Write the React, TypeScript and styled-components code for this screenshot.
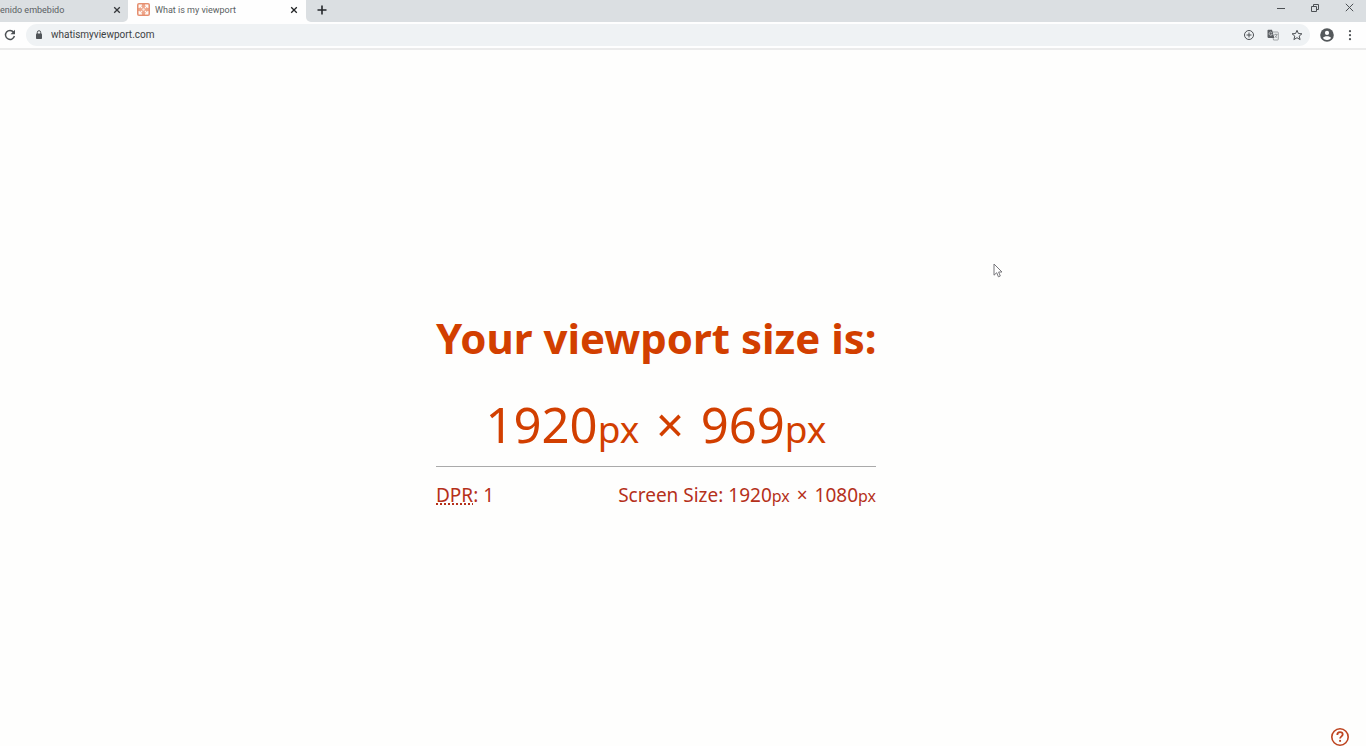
import React from "react";
import styled, { createGlobalStyle } from "styled-components";

const GlobalStyle = createGlobalStyle`
  *, *::before, *::after { box-sizing: border-box; }
  body {
    margin: 0;
    background: #fefefd;
    font-family: "Noto Sans", "Open Sans", sans-serif;
  }
`;

const Window = styled.div`
  display: flex;
  flex-direction: column;
  min-height: 100vh;
  overflow: hidden;
`;

const TabStrip = styled.div`
  display: flex;
  height: 22px;
  background: #fefefe;
`;

const Tab = styled.div<{ $active?: boolean }>`
  display: flex;
  align-items: center;
  flex: none;
  width: ${(p) => (p.$active ? 178 : 128)}px;
  padding: ${(p) => (p.$active ? "0 7px 3px 9px" : "0 6px 3px 0")};
  background: ${(p) => (p.$active ? "#fefefe" : "#dbdfe2")};
  border-bottom-right-radius: ${(p) => (p.$active ? 0 : 5)}px;
`;

const TabTitle = styled.span<{ $inset?: number }>`
  flex: 1;
  margin-left: ${(p) => p.$inset ?? 0}px;
  color: #5a5e62;
  font-family: Roboto, "Open Sans", sans-serif;
  font-size: 9px;
  line-height: 14px;
  white-space: nowrap;
`;

const IconButton = styled.button<{ $size?: number; $color?: string }>`
  display: flex;
  align-items: center;
  justify-content: center;
  flex: none;
  width: ${(p) => p.$size ?? 12}px;
  height: ${(p) => p.$size ?? 12}px;
  padding: 0;
  border: 0;
  background: none;
  color: ${(p) => p.$color ?? "#4c5054"};
`;

const StripRest = styled.div`
  display: flex;
  flex: 1;
  align-items: center;
  justify-content: space-between;
  padding: 0 11px 3px 10px;
  background: #dbdfe2;
  border-bottom-left-radius: 5px;
`;

const WindowControls = styled.div`
  display: flex;
  gap: 22px;
  padding-bottom: 4px;
`;

const Toolbar = styled.form`
  display: flex;
  align-items: center;
  height: 28px;
  padding: 0 10px 0 4px;
  gap: 10px;
  background: #fefefe;
  border-bottom: 2px solid #ebebeb;
`;

const AddressBar = styled.label`
  display: flex;
  flex: 1;
  align-items: center;
  height: 22px;
  padding: 0 6px 0 8px;
  border-radius: 11px;
  background: #eff2f4;
`;

const AddressInput = styled.input`
  flex: 1;
  min-width: 0;
  height: 16px;
  margin-left: 7px;
  padding: 0;
  border: 0;
  outline: 0;
  background: none;
  color: #3c3f43;
  font-family: Roboto, "Open Sans", sans-serif;
  font-size: 10px;
  line-height: 16px;
`;

const AddressActions = styled.div`
  display: flex;
  gap: 10px;
`;

const ToolbarActions = styled.div`
  display: flex;
  align-items: center;
  gap: 10px;
`;

const Page = styled.main`
  position: relative;
  display: flex;
  flex: 1;
  align-items: center;
  justify-content: center;
  padding: 0 54px 0 0;
  color: #d23f00;
`;

const Report = styled.section`
  width: 440px;
  padding-top: 21px;
`;

const Heading = styled.h1`
  margin: 0;
  font-size: 42px;
  font-weight: 700;
  line-height: 60px;
  text-align: center;
  white-space: nowrap;
`;

const Viewport = styled.p`
  margin: 26px 0 0;
  font-size: 49px;
  line-height: 60px;
  text-align: center;
  white-space: nowrap;
`;

const Times = styled.span<{ $gap: number }>`
  margin: 0 ${(p) => p.$gap}px;
`;

const Unit = styled.small<{ $size: number }>`
  font-size: ${(p) => p.$size}px;
`;

const Divider = styled.hr`
  height: 1px;
  margin: 7px 0 14px;
  border: 0;
  background: #aaaaaa;
`;

const Details = styled.div`
  display: flex;
  justify-content: space-between;
  color: #b5301a;
  font-size: 19px;
  line-height: 28px;
  white-space: nowrap;
`;

const Term = styled.abbr`
  text-decoration: underline dotted 2px;
  text-underline-offset: 2px;
`;

const HelpButton = styled.button`
  position: absolute;
  right: 16px;
  bottom: 0;
  display: flex;
  padding: 0;
  border: 0;
  background: none;
`;

const Pointer = styled.svg`
  position: absolute;
  left: 993px;
  top: 213px;
`;

const Cross = () => (
  <svg width="8" height="8" viewBox="0 0 8 8" stroke="currentColor" strokeWidth="1.3">
    <path d="M1.2 1.2l5.6 5.6M6.8 1.2L1.2 6.8" />
  </svg>
);

const SiteIcon = () => (
  <svg width="13" height="13" viewBox="0 0 13 13">
    <rect width="13" height="13" rx="2" fill="#e58f70" />
    <rect x="1.5" y="1.5" width="10" height="10" rx="1" fill="#eda58a" />
    <path
      d="M2.2 5V2.2H5M8 2.2h2.8V5M10.8 8v2.8H8M5 10.8H2.2V8M2.2 2.2L5 5M10.8 2.2L8 5M10.8 10.8L8 8M2.2 10.8L5 8"
      stroke="#fffaf6"
      strokeWidth="1.2"
      fill="none"
    />
    <circle cx="6.5" cy="6.5" r="1.2" fill="#fbe6db" />
  </svg>
);

export default function App() {
  return (
    <Window>
      <GlobalStyle />
      <TabStrip>
        <Tab>
          <TabTitle>enido embebido</TabTitle>
          <IconButton type="button" aria-label="Close tab" $size={10} $color="#34373a">
            <Cross />
          </IconButton>
        </Tab>
        <Tab $active>
          <SiteIcon />
          <TabTitle $inset={5}>What is my viewport</TabTitle>
          <IconButton type="button" aria-label="Close tab" $size={10} $color="#222426">
            <Cross />
          </IconButton>
        </Tab>
        <StripRest>
          <IconButton type="button" aria-label="New tab" $color="#25272b">
            <svg width="10" height="10" viewBox="0 0 10 10" stroke="currentColor" strokeWidth="1.6">
              <path d="M5 .5v9M.5 5h9" />
            </svg>
          </IconButton>
          <WindowControls>
            <IconButton type="button" aria-label="Minimize">
              <svg width="8" height="8" viewBox="0 0 8 8" stroke="currentColor">
                <path d="M0 4.5h8" />
              </svg>
            </IconButton>
            <IconButton type="button" aria-label="Restore">
              <svg width="8" height="8" viewBox="0 0 8 8" fill="none" stroke="currentColor">
                <path d="M.5 2.5h5v5h-5zM2.5 2V.5h5v5H6" />
              </svg>
            </IconButton>
            <IconButton type="button" aria-label="Close window">
              <svg width="9" height="9" viewBox="0 0 9 9" stroke="currentColor">
                <path d="M.8.8l7.4 7.4M8.2.8L.8 8.2" />
              </svg>
            </IconButton>
          </WindowControls>
        </StripRest>
      </TabStrip>
      <Toolbar onSubmit={(e) => e.preventDefault()}>
        <IconButton type="button" aria-label="Reload">
          <svg width="12" height="12" viewBox="0 0 12 12">
            <path d="M9.6 3.2A4.5 4.5 0 1 0 10.4 7" fill="none" stroke="currentColor" strokeWidth="1.4" />
            <path d="M11 .8v4.5H6.5z" fill="currentColor" />
          </svg>
        </IconButton>
        <AddressBar>
          <svg width="10" height="12" viewBox="0 0 10 12">
            <rect x="2" y="4.5" width="6" height="5.5" rx=".8" fill="#505458" />
            <path d="M3.3 5V3.4a1.7 1.7 0 0 1 3.4 0V5" fill="none" stroke="#505458" strokeWidth="1" />
          </svg>
          <AddressInput aria-label="Address" defaultValue="whatismyviewport.com" spellCheck={false} />
          <AddressActions>
            <IconButton type="button" aria-label="Zoom" $size={14}>
              <svg width="12" height="12" viewBox="0 0 12 12" fill="none" stroke="currentColor">
                <circle cx="6" cy="6" r="4.5" />
                <path d="M6 3.5v5M3.5 6h5" />
              </svg>
            </IconButton>
            <IconButton type="button" aria-label="Translate" $size={14}>
              <svg width="12" height="12" viewBox="0 0 12 12">
                <path d="M5 3h5.5a.8.8 0 0 1 .8.8v6.4a.8.8 0 0 1-.8.8H6.5z" fill="#eff2f4" stroke="#8b8f92" strokeWidth=".8" />
                <path d="M1.3.8H5l2.4 8.1H1.3a.8.8 0 0 1-.8-.8V1.6a.8.8 0 0 1 .8-.8z" fill="#5c6064" />
                <path d="M4.9 3.7a1.6 1.6 0 1 0 .3 1.5H3.8" fill="none" stroke="#d8dadc" strokeWidth=".7" />
                <path d="M7.2 5.4h3.3M8.8 4.7v.7M10 5.5c-.3 1.4-1.1 2.3-2.1 3M7.8 6.5c.6 1 1.2 1.6 2.4 2.2" fill="none" stroke="#7b7f82" strokeWidth=".7" />
              </svg>
            </IconButton>
            <IconButton type="button" aria-label="Bookmark" $size={14}>
              <svg width="12" height="12" viewBox="0 0 12 12" fill="none" stroke="currentColor">
                <path d="M6 1.3l1.4 3.2 3.5.3-2.7 2.3.9 3.5L6 8.7l-3.1 1.9.9-3.5L1.1 4.8l3.5-.3z" />
              </svg>
            </IconButton>
          </AddressActions>
        </AddressBar>
        <ToolbarActions>
          <IconButton type="button" aria-label="Profile" $size={14}>
            <svg width="14" height="14" viewBox="0 0 14 14">
              <circle cx="7" cy="7" r="6.8" fill="#54585b" />
              <circle cx="7" cy="4.9" r="2.1" fill="#fefefe" />
              <path d="M2.9 10.1C3.3 8.7 5.5 8.2 7 8.2s3.7.5 4.1 1.9A5.1 5.1 0 0 1 7 12a5.1 5.1 0 0 1-4.1-1.9z" fill="#fefefe" />
            </svg>
          </IconButton>
          <IconButton type="button" aria-label="Menu">
            <svg width="12" height="12" viewBox="0 0 12 12" fill="currentColor">
              <circle cx="6" cy="2.2" r="1.1" />
              <circle cx="6" cy="6.2" r="1.1" />
              <circle cx="6" cy="10.2" r="1.1" />
            </svg>
          </IconButton>
        </ToolbarActions>
      </Toolbar>
      <Page>
        <Report>
          <Heading>Your viewport size is:</Heading>
          <Viewport>
            1920<Unit $size={37}>px</Unit> <Times $gap={4}>×</Times> 969<Unit $size={37}>px</Unit>
          </Viewport>
          <Divider />
          <Details>
            <span>
              <Term>DPR</Term>: 1
            </span>
            <span>
              Screen Size: 1920<Unit $size={16}>px</Unit> <Times $gap={2}>×</Times> 1080<Unit $size={16}>px</Unit>
            </span>
          </Details>
        </Report>
        <Pointer width="10" height="16" viewBox="0 0 10 16" aria-hidden="true">
          <path
            d="M1 1v11.2l2.7-2.5 1.7 4.1 1.9-.8-1.7-4H9z"
            fill="#fff"
            stroke="#77777b"
            strokeWidth="1"
          />
        </Pointer>
        <HelpButton type="button" aria-label="Help">
          <svg width="20" height="20" viewBox="0 0 20 20" fill="none" stroke="#bd4420">
            <circle cx="10" cy="11" r="8.2" strokeWidth="1.6" />
            <path d="M7.3 8.9c0-1.7 1.1-2.7 2.7-2.7s2.7.9 2.7 2.3c0 1.8-2.6 2-2.6 4" strokeWidth="1.8" />
            <path d="M10.1 13.9v1.9" strokeWidth="1.9" />
          </svg>
        </HelpButton>
      </Page>
    </Window>
  );
}
